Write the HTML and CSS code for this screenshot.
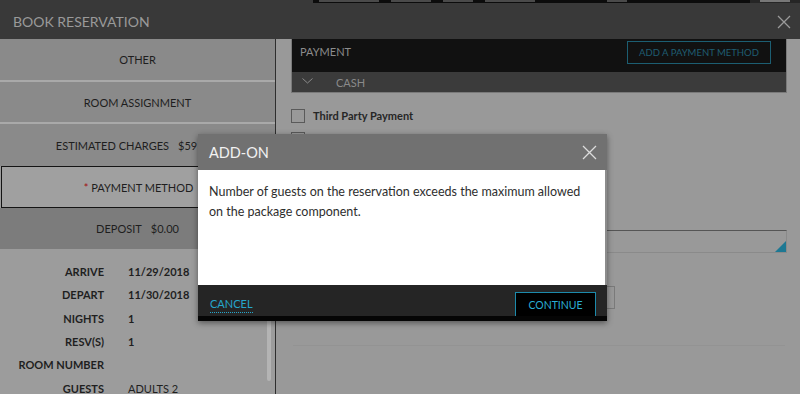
FILE: index.html
```html
<!DOCTYPE html>
<html>
<head>
<meta charset="utf-8">
<link rel="stylesheet" href="styles.css">
</head>
<body>
<div class="page">
  <div class="app-header">
    <div class="underlay">
      <div class="ul-gap"></div>
      <div class="ul-dark">
        <span class="ul-frag w60"></span><span class="ul-frag w40"></span><span class="ul-frag w30"></span><span class="ul-frag w50"></span><span class="ul-frag w20 ml60"></span>
      </div>
      <div class="ul-light"><span class="ul-frag w30 lt"></span></div>
    </div>
    <div class="title-row">
      <div class="title">BOOK RESERVATION</div>
      <svg class="close" width="14" height="14" viewBox="0 0 14 14"><path d="M1 1L13 13M13 1L1 13" stroke="#9a9a9a" stroke-width="1.3" fill="none"/></svg>
    </div>
  </div>
  <div class="main">
    <div class="left">
      <div class="tab tab-sep">OTHER</div>
      <div class="tab tab-sep tab-room">ROOM ASSIGNMENT</div>
      <div class="tab tab-est">ESTIMATED CHARGES<span class="amt">$59</span></div>
      <div class="tab tab-active"><span class="req">*</span>&nbsp;PAYMENT METHOD</div>
      <div class="tab tab-deposit">DEPOSIT<span class="amt">$0.00</span></div>
      <div class="summary">
        <div class="lbl">ARRIVE</div><div class="val">11/29/2018</div>
        <div class="lbl">DEPART</div><div class="val">11/30/2018</div>
        <div class="lbl">NIGHTS</div><div class="val">1</div>
        <div class="lbl">RESV(S)</div><div class="val">1</div>
        <div class="lbl">ROOM NUMBER</div><div class="val"></div>
        <div class="lbl">GUESTS</div><div class="val val-light">ADULTS 2</div>
      </div>
      <div class="scroll-thumb"></div>
    </div>
    <div class="right">
      <div class="pay-box">
        <div class="pay-head">
          <span class="pay-title">PAYMENT</span>
          <span class="add-btn">ADD A PAYMENT METHOD</span>
        </div>
        <div class="cash-row">
          <svg class="chev" width="11" height="6" viewBox="0 0 11 6"><path d="M0.5 0.5L5.5 5L10.5 0.5" stroke="#8a8a8a" stroke-width="1" fill="none"/></svg>
          <span class="cash">CASH</span>
        </div>
      </div>
      <div class="check-row"><span class="cb"></span><span class="cb-label">Third Party Payment</span></div>
      <div class="check-row check-row2"><span class="cb"></span></div>
      <div class="field"><span class="corner"></span></div>
      <div class="small-row"><div class="small-box"></div></div>
      <div class="hline"></div>
    </div>
  </div>

  <div class="dialog">
    <div class="dlg-head">
      <span class="dlg-title">ADD-ON</span>
      <svg class="dlg-close" width="15" height="15" viewBox="0 0 15 15"><path d="M1 1L14 14M14 1L1 14" stroke="#dcdcdc" stroke-width="1.3" fill="none"/></svg>
    </div>
    <div class="dlg-body">Number of guests on the reservation exceeds the maximum allowed on the package component.</div>
    <div class="dlg-foot">
      <span class="cancel">CANCEL</span>
      <span class="continue">CONTINUE</span>
    </div>
  </div>
</div>
</body>
</html>
```

FILE: styles.css
```css
* { box-sizing: border-box; }
html, body { margin: 0; padding: 0; }
body {
  width: 800px;
  height: 394px;
  overflow: hidden;
  font-family: Lato, "Open Sans", "Liberation Sans", sans-serif;
  background: #999999;
}
.page {
  position: relative;
  width: 800px;
  height: 394px;
  overflow: hidden;
}

/* header */
.app-header {
  height: 39px;
  background: #393939;
}
.underlay {
  display: flex;
  height: 3px;
  overflow: hidden;
}
.ul-gap { width: 313px; }
.ul-dark {
  width: 437px;
  background: #0c0c0c;
  display: flex;
  gap: 12px;
  padding-left: 6px;
}
.ul-light {
  flex: 1;
  background: #262626;
  padding-left: 10px;
  display: flex;
}
.ul-frag {
  height: 2px;
  background: #4a4a4a;
}
.ul-frag.lt { background: #777777; }
.w20 { width: 20px; }
.w30 { width: 30px; }
.w40 { width: 40px; }
.w50 { width: 50px; }
.w60 { width: 60px; }
.ml60 { margin-left: 60px; }
.title-row {
  height: 36px;
  display: flex;
  align-items: center;
  justify-content: space-between;
  padding: 0 9px 0 13px;
}
.title {
  font-size: 14px;
  color: #9a9a9a;
}
.close { margin-top: 1px; }

/* main */
.main {
  display: flex;
  height: 355px;
}
.left {
  position: relative;
  width: 276px;
  border-right: 1px solid #2e2e2e;
  background: #9c9c9c;
}
.tab {
  height: 41px;
  display: flex;
  align-items: center;
  justify-content: center;
  font-size: 11px;
  color: #1e1e1e;
  background: #8a8a8a;
}
.tab-sep { border-bottom: 2px solid #a9a9a9; height: 43px; }
.tab-room { height: 42px; }
.tab-est { height: 42px; padding-right: 22px; }
.amt { margin-left: 9px; }
.tab-active {
  height: 42px;
  background: #a0a0a0;
  border: 1px solid #141414;
  border-right: none;
  margin-left: 1px;
}
.req { color: #a01010; }
.tab-deposit {
  height: 41px;
  background: #7c7c7c;
}
.summary {
  display: grid;
  grid-template-columns: 104px 1fr;
  column-gap: 24px;
  grid-auto-rows: 23.3px;
  padding-top: 11px;
  font-size: 11px;
  color: #1f1f1f;
}
.lbl, .val {
  display: flex;
  align-items: center;
  font-weight: 700;
}
.lbl { justify-content: flex-end; }
.val-light { font-weight: 400; }
.scroll-thumb {
  position: absolute;
  left: 267px;
  top: 212px;
  width: 4px;
  height: 130px;
  background: #b4b4b4;
  border-radius: 2px;
}

.right {
  flex: 1;
  padding: 0 13px 0 15px;
  background: #999999;
}
.pay-box {
  border: 1px solid #7a7a7a;
  border-top: none;
}
.pay-head {
  height: 33px;
  background: #111111;
  display: flex;
  align-items: flex-start;
  justify-content: space-between;
  padding: 2px 15px 0 8px;
}
.pay-title {
  font-size: 11px;
  line-height: 22px;
  color: #8c8c8c;
}
.add-btn {
  height: 23px;
  width: 144px;
  display: flex;
  align-items: center;
  justify-content: center;
  border: 1px solid #1c5e72;
  color: #1f5d72;
  font-size: 9.5px;
}
.cash-row {
  height: 20px;
  background: #3b3b3b;
  display: flex;
  align-items: center;
  padding-left: 10px;
}
.chev { margin-top: -3px; }
.cash {
  margin-left: 23px;
  font-size: 11px;
  color: #8a8a8a;
}
.check-row {
  display: flex;
  align-items: center;
  gap: 8px;
  margin-top: 16px;
  height: 14px;
}
.check-row2 { margin-top: 9px; }
.cb {
  width: 14px;
  height: 14px;
  border: 1px solid #5a5a5a;
}
.cb-label {
  font-size: 11px;
  font-weight: 700;
  color: #262626;
  margin-top: -1px;
}
.field {
  position: relative;
  margin-top: 84px;
  height: 23px;
  border: 1px solid #8a8a8a;
  border-top-color: #555555;
}
.corner {
  position: absolute;
  right: 0;
  bottom: 0;
  width: 0;
  height: 0;
  border-style: solid;
  border-width: 0 0 11px 11px;
  border-color: transparent transparent #1d7893 transparent;
}
.small-row {
  display: flex;
  margin-top: 33px;
}
.small-box {
  margin-left: 230px;
  width: 94px;
  height: 23px;
  border: 1px solid #7a7a7a;
}
.hline {
  margin-top: 36px;
  height: 1px;
  background: #939393;
  margin-left: 2px;
  margin-right: 2px;
}

/* dialog */
.dialog {
  position: absolute;
  left: 198px;
  top: 134px;
  width: 409px;
  box-shadow: 0 2px 6px rgba(0,0,0,0.45);
  background: #ffffff;
}
.dlg-head {
  height: 36px;
  background: #717171;
  display: flex;
  align-items: center;
  justify-content: space-between;
  padding: 0 10px 0 11px;
}
.dlg-title {
  font-size: 14.5px;
  color: #f2f2f2;
  margin-top: 1px;
}
.dlg-body {
  height: 115px;
  padding: 12px 14px 0 11px;
  font-size: 12.5px;
  line-height: 20px;
  color: #2e2e2e;
  border-right: 2px solid #8c8c8c;
}
.dlg-foot {
  height: 36px;
  background: #252525;
  border-bottom: 5px solid #050505;
  overflow: hidden;
  display: flex;
  justify-content: space-between;
  align-items: flex-start;
  padding: 0 11px 0 12px;
}
.cancel {
  margin-top: 12px;
  font-size: 11px;
  color: #25a5cb;
  border-bottom: 1px dotted #25a5cb;
  line-height: 14px;
  padding-bottom: 1px;
}
.continue {
  margin-top: 7px;
  width: 81px;
  height: 28px;
  border: 1px solid #1c8aab;
  background: #000000;
  color: #2aaed4;
  font-size: 10.5px;
  display: flex;
  justify-content: center;
  padding-top: 6px;
}
```
